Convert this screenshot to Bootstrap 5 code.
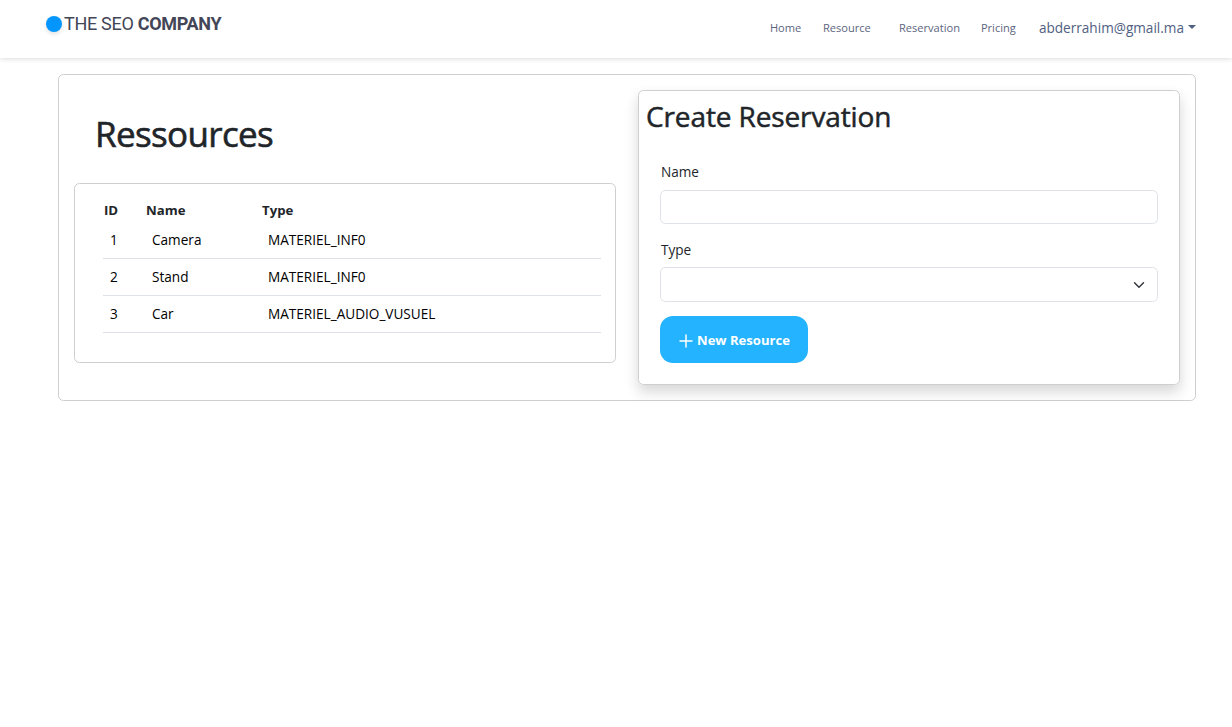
<!DOCTYPE html>
<html lang="en">
<head>
<meta charset="utf-8">
<meta name="viewport" content="width=device-width, initial-scale=1">
<title>Ressources</title>
<link href="https://cdn.jsdelivr.net/npm/bootstrap@5.3.0/dist/css/bootstrap.min.css" rel="stylesheet">
<style>
html { font-size: 14.4px; }
body { font-family: "Open Sans", "Noto Sans", sans-serif; font-size: 13.6px; background: #fff; }
.site-header { height: 58px; padding: 0 36px 0 46px; box-shadow: 0 1px 5px rgba(0,0,0,.14); }
.brand { margin-top: -10px; gap: 2px; font: 400 18px/24px Roboto, sans-serif; color: #434657; white-space: nowrap; }
.brand-dot { width: 16px; height: 16px; border-radius: 50%; background: #0396ff; box-shadow: 0 2px 4px rgba(0,0,0,.12); }
.brand-name { letter-spacing: -.3px; }
.brand-name b { font-weight: 700; }
.menu { margin-top: -2px; }
.menu-link { color: #5c6580; padding: 0; font-size: 11.1px; line-height: 20px; white-space: nowrap; }
.menu-user { font-size: 13.6px; color: #506081; }
.menu-user::after { border-top-width: 4px; border-left-width: 4px; border-right-width: 4px; margin-left: 4px; vertical-align: 4px; }
.menu-home { width: 53px; }
.menu-resource { width: 76px; }
.menu-reservation { width: 82px; }
.menu-pricing { width: 58px; }
.panel { border: 1px solid #cfcfcf; border-radius: 5.4px; }
.outer { margin: 16px 36px 0 58px; height: 327px; padding: 15px; gap: 22px; }
.half { width: 542px; }
.page-title { margin: 22px 0 0 21px; height: 71px; font-size: 35px; line-height: 43px; font-weight: 500; letter-spacing: -.65px; -webkit-text-stroke: .6px #212529; }
.list-panel { height: 180px; padding: 17px 14px 0 28px; }
.grid-row { height: 37px; border-bottom: 1px solid #dee2e6; color: #000; padding-left: 7px; }
.grid-head { height: 20px; font-weight: 700; padding-left: 1px; font-size: 13.2px; }
.grid-first { height: 38px; padding-top: 2px; }
.c-id { width: 42px; }
.c-name { width: 116px; }
.form-panel { height: 295px; padding: 7px; box-shadow: 0 7px 14px rgba(0,0,0,.16); }
.form-title { font-size: 28px; line-height: 37px; font-weight: 500; margin: 0 0 27px; letter-spacing: -.12px; -webkit-text-stroke: .5px #212529; }
.fields { padding: 0 14px; }
.field-label { line-height: 20px; margin: 0 0 8px 1px; display: block; }
.type-label { margin: 16px 0 7px 1px; }
.form-control, .form-select { height: 34px; border-color: #dee2e6; border-radius: 5.4px; font-size: 14px; }
.form-select { height: 35px; background-size: 12px 12px; background-position: right 12px center; }
.btn-new { width: 148px; height: 47px; border-radius: 13px; background: #24b3fe; color: #fff; font-weight: 700; font-size: 13.1px; padding: 2px 0 0 1px; margin-top: 14px; gap: 4px; white-space: nowrap; }
</style>
</head>
<body>
<header class="site-header d-flex align-items-center justify-content-between">
  <a class="brand d-flex align-items-center text-decoration-none" href="#"><span class="brand-dot"></span><span class="brand-name">THE SEO <b>COMPANY</b></span></a>
  <nav class="menu d-flex align-items-center">
    <a class="nav-link menu-link menu-home" href="#">Home</a>
    <a class="nav-link menu-link menu-resource" href="#">Resource</a>
    <a class="nav-link menu-link menu-reservation" href="#">Reservation</a>
    <a class="nav-link menu-link menu-pricing" href="#">Pricing</a>
    <a class="nav-link menu-link menu-user dropdown-toggle" href="#">abderrahim@gmail.ma</a>
  </nav>
</header>
<main class="outer panel d-flex align-items-start">
  <section class="half">
    <h1 class="page-title">Ressources</h1>
    <div class="list-panel panel">
      <div class="grid-head d-flex align-items-center"><span class="c-id">ID</span><span class="c-name">Name</span><span>Type</span></div>
      <div class="grid-row grid-first d-flex align-items-center"><span class="c-id">1</span><span class="c-name">Camera</span><span>MATERIEL_INF0</span></div>
      <div class="grid-row d-flex align-items-center"><span class="c-id">2</span><span class="c-name">Stand</span><span>MATERIEL_INF0</span></div>
      <div class="grid-row d-flex align-items-center"><span class="c-id">3</span><span class="c-name">Car</span><span>MATERIEL_AUDIO_VUSUEL</span></div>
    </div>
  </section>
  <section class="half form-panel panel">
    <h2 class="form-title">Create Reservation</h2>
    <form class="fields">
      <label class="field-label" for="name">Name</label>
      <input class="form-control" id="name" type="text">
      <label class="field-label type-label" for="type">Type</label>
      <select class="form-select" id="type"><option></option></select>
      <button type="button" class="btn btn-new d-flex align-items-center justify-content-center">
        <svg width="14" height="14" viewBox="0 0 14 14" fill="none" stroke="#fff" stroke-width="1.5" stroke-linecap="round"><path d="M7 1v12M1 7h12"/></svg>
        <span>New Resource</span>
      </button>
    </form>
  </section>
</main>
<script src="https://cdn.jsdelivr.net/npm/bootstrap@5.3.0/dist/js/bootstrap.bundle.min.js"></script>
</body>
</html>
